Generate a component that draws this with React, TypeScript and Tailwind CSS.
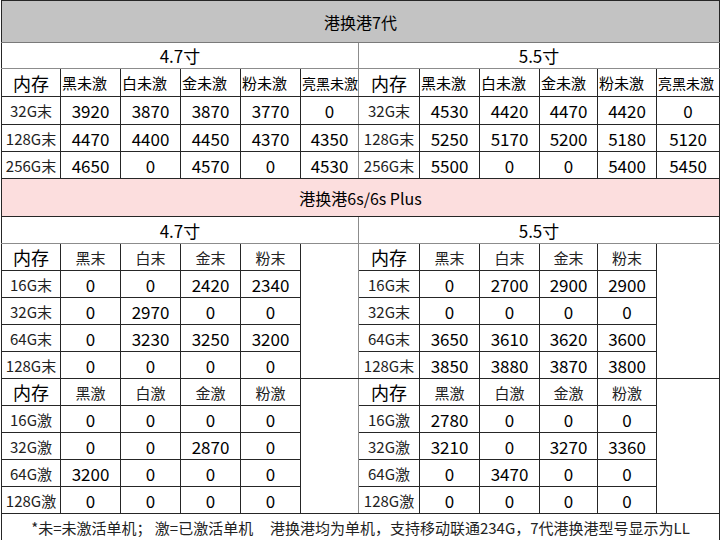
import React from "react";

const line = "border border-[#262626]";
const soft = "border-r-[#8c8c8c]";

type Row = { label: string; values: number[] };

const gen7Left: Row[] = [
    { label: "32G末", values: [3920, 3870, 3870, 3770, 0] },
    { label: "128G末", values: [4470, 4400, 4450, 4370, 4350] },
    { label: "256G末", values: [4650, 0, 4570, 0, 4530] },
];
const gen7Right: Row[] = [
    { label: "32G末", values: [4530, 4420, 4470, 4420, 0] },
    { label: "128G末", values: [5250, 5170, 5200, 5180, 5120] },
    { label: "256G末", values: [5500, 0, 0, 5400, 5450] },
];

const s6LeftNew: Row[] = [
    { label: "16G末", values: [0, 0, 2420, 2340] },
    { label: "32G末", values: [0, 2970, 0, 0] },
    { label: "64G末", values: [0, 3230, 3250, 3200] },
    { label: "128G末", values: [0, 0, 0, 0] },
];
const s6RightNew: Row[] = [
    { label: "16G末", values: [0, 2700, 2900, 2900] },
    { label: "32G末", values: [0, 0, 0, 0] },
    { label: "64G末", values: [3650, 3610, 3620, 3600] },
    { label: "128G末", values: [3850, 3880, 3870, 3800] },
];
const s6LeftAct: Row[] = [
    { label: "16G激", values: [0, 0, 0, 0] },
    { label: "32G激", values: [0, 0, 2870, 0] },
    { label: "64G激", values: [3200, 0, 0, 0] },
    { label: "128G激", values: [0, 0, 0, 0] },
];
const s6RightAct: Row[] = [
    { label: "16G激", values: [2780, 0, 0, 0] },
    { label: "32G激", values: [3210, 0, 3270, 3360] },
    { label: "64G激", values: [0, 3470, 0, 0] },
    { label: "128G激", values: [0, 0, 0, 0] },
];

const colWidths = [59, 60, 60, 60, 60, 58, 61, 60, 60, 58, 59, 63];

function Label({ text, last }: { text: string; last?: boolean }) {
    return (
        <td className={`${line} text-center text-[15px] text-[#222] ${last ? soft : ""}`}>
            {text}
        </td>
    );
}

function Num({ v, edge }: { v: number; edge?: boolean }) {
    return (
        <td className={`${line} text-center text-[17px] text-black ${edge ? soft : ""}`}>
            {v}
        </td>
    );
}

function Gen7Header() {
    const names = ["黑未激", "白未激", "金未激", "粉未激", "亮黑未激"];
    const half = (side: string) => (
        <>
            <td className={`${line} text-center text-[18px]`}>内存</td>
            {names.map((n, i) => (
                <td
                    key={side + n}
                    className={`${line} text-left pl-[1px] whitespace-nowrap overflow-hidden ${
                        i === 4 ? "text-[14px]" : "text-[15px]"
                    } ${i === 4 && side === "l" ? soft : ""}`}
                >
                    {n}
                </td>
            ))}
        </>
    );
    return (
        <tr className="h-[28px]">
            {half("l")}
            {half("r")}
        </tr>
    );
}

function S6Header({ names, withBlank }: { names: string[]; withBlank: boolean }) {
    const half = (side: string) => (
        <>
            <td className={`${line} text-center text-[18px]`}>内存</td>
            {names.map((n) => (
                <td key={side + n} className={`${line} text-center text-[15px] text-[#222]`}>
                    {n}
                </td>
            ))}
            {withBlank && (
                <td
                    rowSpan={5}
                    className={`border-b border-r border-[#262626] ${side === "l" ? "border-r-[#8c8c8c]" : ""}`}
                />
            )}
        </>
    );
    return (
        <tr className="h-[27px]">
            {half("l")}
            {half("r")}
        </tr>
    );
}

export default function App() {
    return (
        <div className="w-[720px] h-[540px] bg-white overflow-hidden font-['Noto_Sans_CJK_SC','Microsoft_YaHei',sans-serif] leading-none text-black">
            <table className="table-fixed border-collapse w-[719px] ml-[1px]">
                <colgroup>
                    {colWidths.map((w, i) => (
                        <col key={i} style={{ width: w }} />
                    ))}
                </colgroup>
                <tbody>
                    {/* 7代 */}
                    <tr className="h-[42px]">
                        <td colSpan={12} className={`${line} border-b-[#7a7a7a] bg-[#c3c3c3] text-center text-[16px]`}>
                            港换港7代
                        </td>
                    </tr>
                    <tr className="h-[26px]">
                        <td colSpan={6} className={`${line} ${soft} border-b-[#8c8c8c] text-center text-[17px]`}>
                            4.7寸
                        </td>
                        <td colSpan={6} className={`${line} border-b-[#8c8c8c] text-center text-[17px]`}>
                            5.5寸
                        </td>
                    </tr>
                    <Gen7Header />
                    {gen7Left.map((r, i) => (
                        <tr key={r.label} className={i === 0 ? "h-[28px]" : "h-[27px]"}>
                            <Label text={r.label} />
                            {r.values.map((v, j) => (
                                <Num key={j} v={v} edge={j === 4} />
                            ))}
                            <Label text={gen7Right[i].label} />
                            {gen7Right[i].values.map((v, j) => (
                                <Num key={"r" + j} v={v} />
                            ))}
                        </tr>
                    ))}

                    {/* 6s / 6s Plus */}
                    <tr className="h-[38px]">
                        <td colSpan={12} className={`${line} bg-[#fcdede] text-center text-[16px]`}>
                            港换港6s/6s Plus
                        </td>
                    </tr>
                    <tr className="h-[27px]">
                        <td colSpan={6} className={`${line} ${soft} border-b-[#8c8c8c] text-center text-[17px]`}>
                            4.7寸
                        </td>
                        <td colSpan={6} className={`${line} border-b-[#8c8c8c] text-center text-[17px]`}>
                            5.5寸
                        </td>
                    </tr>
                    <S6Header names={["黑末", "白末", "金末", "粉末"]} withBlank />
                    {s6LeftNew.map((r, i) => (
                        <tr key={r.label} className="h-[27px]">
                            <Label text={r.label} />
                            {r.values.map((v, j) => (
                                <Num key={j} v={v} />
                            ))}
                            <Label text={s6RightNew[i].label} />
                            {s6RightNew[i].values.map((v, j) => (
                                <Num key={"r" + j} v={v} />
                            ))}
                        </tr>
                    ))}
                    <S6Header names={["黑激", "白激", "金激", "粉激"]} withBlank />
                    {s6LeftAct.map((r, i) => (
                        <tr key={r.label} className="h-[27px]">
                            <Label text={r.label} />
                            {r.values.map((v, j) => (
                                <Num key={j} v={v} />
                            ))}
                            <Label text={s6RightAct[i].label} />
                            {s6RightAct[i].values.map((v, j) => (
                                <Num key={"r" + j} v={v} />
                            ))}
                        </tr>
                    ))}

                    {/* footer note */}
                    <tr className="h-[28px]">
                        <td colSpan={12} className={`${line} border-b-0 text-center text-[15px] text-[#222] whitespace-nowrap`}>
                            *未=未激活单机； 激=已激活单机&nbsp;&nbsp;&nbsp;&nbsp;&nbsp;港换港均为单机，支持移动联通234G，7代港换港型号显示为LL
                        </td>
                    </tr>
                </tbody>
            </table>
        </div>
    );
}
